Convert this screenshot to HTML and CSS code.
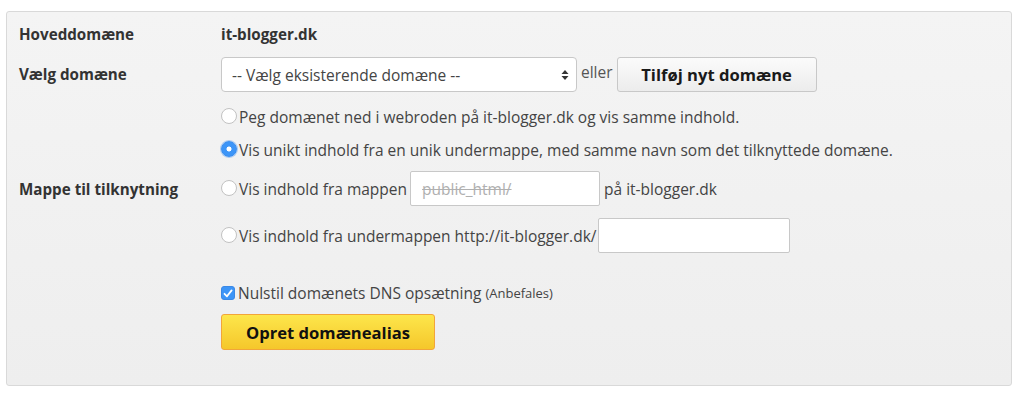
FILE: index.html
```html
<!DOCTYPE html>
<html lang="da">
<head>
    <meta charset="UTF-8">
    <title>Opret domænealias</title>
    <link rel="stylesheet" href="styles.css">
</head>
<body>
<div class="panel">
    <div class="row row-main">
        <div class="lbl">Hoveddomæne</div>
        <div class="val strong">it-blogger.dk</div>
    </div>
    <div class="row row-select">
        <div class="lbl">Vælg domæne</div>
        <div class="val">
            <div class="select-wrap">
                <select class="sel">
                    <option>-- Vælg eksisterende domæne --</option>
                </select>
                <svg class="sel-arrow" width="8" height="12" viewBox="0 0 8 12">
                    <path d="M4 1 L7.5 5 L0.5 5 Z M4 11 L7.5 7 L0.5 7 Z" fill="#333"/>
                </svg>
            </div>
            <span class="or">eller</span>
            <button class="btn">Tilføj nyt domæne</button>
        </div>
    </div>
    <div class="row row-opt first">
        <div class="lbl"></div>
        <label class="val"><input type="radio" name="map" class="rad">Peg domænet ned i webroden på it-blogger.dk og vis samme indhold.</label>
    </div>
    <div class="row row-opt">
        <div class="lbl"></div>
        <label class="val"><input type="radio" name="map" class="rad" checked>Vis unikt indhold fra en unik undermappe, med samme navn som det tilknyttede domæne.</label>
    </div>
    <div class="row row-field">
        <div class="lbl">Mappe til tilknytning</div>
        <div class="val">
            <label><input type="radio" name="map" class="rad">Vis indhold fra mappen</label>
            <input type="text" class="txt txt-dir" placeholder="public_html/">
            <span>på it-blogger.dk</span>
        </div>
    </div>
    <div class="row row-field second">
        <div class="lbl"></div>
        <div class="val">
            <label><input type="radio" name="map" class="rad">Vis indhold fra undermappen http://it-blogger.dk/</label>
            <input type="text" class="txt txt-sub">
        </div>
    </div>
    <div class="row row-check">
        <div class="lbl"></div>
        <label class="val">
            <span class="chk"><svg width="10" height="9" viewBox="0 0 10 9"><path d="M1.5 4.8 L4 7.3 L8.6 1.4" fill="none" stroke="#fff" stroke-width="1.8" stroke-linecap="round" stroke-linejoin="round"/></svg></span>Nulstil domænets DNS opsætning <small>(Anbefales)</small>
        </label>
    </div>
    <div class="row row-submit">
        <div class="lbl"></div>
        <div class="val"><button class="btn btn-yellow">Opret domænealias</button></div>
    </div>
</div>
</body>
</html>
```

FILE: styles.css
```css
* {
    margin: 0;
    padding: 0;
    box-sizing: border-box;
}

body {
    background: #fff;
    font-family: "Open Sans", "Liberation Sans", sans-serif;
    font-size: 15.5px;
    color: #444;
    padding: 11px 12px 0 6px;
}

.panel {
    border: 1px solid #d9d9d9;
    border-radius: 3px;
    background: linear-gradient(to bottom, #f4f4f4, #eeeeee);
    padding: 12px 12px 35px 12px;
    height: 375px;
}

.row {
    display: grid;
    grid-template-columns: 202px 1fr;
    align-items: center;
}

.lbl {
    font-weight: bold;
    font-size: 15.2px;
    color: #333;
    line-height: 22px;
}

.val {
    display: flex;
    align-items: center;
    line-height: 22px;
}

.strong {
    font-weight: bold;
    font-size: 15.2px;
    color: #333;
}

.row-main {
    margin-top: -1px;
}

.row-select {
    margin-top: 12px;
}

.row-select .lbl {
    margin-top: -2px;
}

.select-wrap {
    position: relative;
}

.sel {
    appearance: none;
    -webkit-appearance: none;
    width: 356px;
    height: 35px;
    border: 1px solid #c8c8c8;
    border-radius: 4px;
    background: #fff;
    font-family: inherit;
    font-size: 15.5px;
    color: #444;
    padding: 0 10px;
}

.sel-arrow {
    position: absolute;
    right: 8px;
    top: 12px;
}

.or {
    margin: -6px 4px 0 4px;
    color: #555;
}

.btn {
    height: 35px;
    width: 200px;
    border: 1px solid #c8c8c8;
    border-radius: 3px;
    background: linear-gradient(to bottom, #fbfbfb, #ececec);
    font-family: inherit;
    font-size: 16.6px;
    font-weight: bold;
    color: #1a1a1a;
}

.row-opt {
    margin-top: 11px;
}

.row-opt.first {
    margin-top: 14px;
}

.rad {
    appearance: none;
    -webkit-appearance: none;
    width: 16px;
    height: 16px;
    border: 1px solid #c2c2c2;
    border-radius: 50%;
    background: #fff;
    margin-right: 2px;
    flex: none;
    vertical-align: middle;
    position: relative;
    top: -1px;
}

.rad:checked {
    border-color: #3a8ef0;
    background: radial-gradient(circle, #fff 0 2.2px, #3d95f7 2.8px);
    box-shadow: 0 0 0 1px rgba(80, 150, 240, 0.45);
}

.val label {
    display: flex;
    align-items: center;
}

.row-field {
    margin-top: 10px;
}

.row-field.second {
    margin-top: 12px;
}

.txt {
    height: 35px;
    border: 1px solid #c8c8c8;
    border-radius: 2px;
    background: #fff;
    font-family: inherit;
    font-size: 15.5px;
    padding: 0 11px;
    color: #444;
}

.txt::placeholder {
    color: #b0b0b0;
    text-decoration: line-through;
}

.txt-dir {
    width: 190px;
    margin: 0 4px 0 3px;
}

.txt-sub {
    width: 192px;
    margin-left: 2px;
}

.row-check {
    margin-top: 29px;
}

.chk {
    width: 14px;
    height: 14px;
    border-radius: 3px;
    background: #3d95f7;
    border: 1px solid #3a88e6;
    display: flex;
    align-items: center;
    justify-content: center;
    margin-right: 3px;
    flex: none;
}

.val small {
    font-size: 13px;
    margin-left: 4px;
}

.row-submit {
    margin-top: 10px;
}

.btn-yellow {
    width: 214px;
    height: 36px;
    border: 1px solid #f2a53a;
    background: linear-gradient(to bottom, #fde64b, #f5c72b);
    color: #111;
}
```
